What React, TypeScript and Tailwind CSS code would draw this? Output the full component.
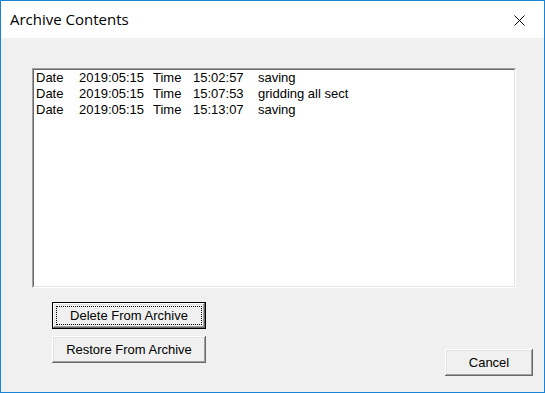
const rows = [
  { date: "2019:05:15", time: "15:02:57", note: "saving" },
  { date: "2019:05:15", time: "15:07:53", note: "gridding all sect" },
  { date: "2019:05:15", time: "15:13:07", note: "saving" },
];

const bevel =
  "shadow-[inset_-1px_-1px_0_#696969,inset_1px_1px_0_#ffffff,inset_-2px_-2px_0_#a0a0a0,inset_2px_2px_0_#e3e3e3]";

function Win95Button({ label, isDefault, className }: { label: string; isDefault?: boolean; className?: string }) {
  if (isDefault) {
    return (
      <div className={`border border-black bg-[#f0f0f0] ${className ?? ""}`}>
        <div className={`relative flex h-full w-full items-center justify-center ${bevel}`}>
          <div className="absolute inset-[3px] border border-dotted border-black" />
          <span className="text-[13px] text-black">{label}</span>
        </div>
      </div>
    );
  }
  return (
    <div className={`flex items-center justify-center bg-[#f0f0f0] ${bevel} ${className ?? ""}`}>
      <span className="text-[13px] text-black">{label}</span>
    </div>
  );
}

export default function App() {
  return (
    <div
      className="flex h-[393px] w-[545px] flex-col border border-[#1883d7] bg-[#f0f0f0]"
      style={{ fontFamily: '"Liberation Sans", Arial, sans-serif' }}
    >
      <div className="flex h-[37px] shrink-0 items-center justify-between bg-white pl-[9px] pr-[19px]">
        <span className="text-[15px] text-black" style={{ fontFamily: '"Open Sans", "Noto Sans", sans-serif' }}>
          Archive Contents
        </span>
        <svg width="11" height="11" viewBox="0 0 11 11" className="mt-[1px]">
          <path d="M0.5 0.5 L10.5 10.5 M10.5 0.5 L0.5 10.5" stroke="#000" strokeWidth="1" />
        </svg>
      </div>

      <div className="flex flex-1 flex-col pl-[31px] pt-[30px]">
        <div className="h-[220px] w-[484px] border border-b-white border-l-[#a0a0a0] border-r-white border-t-[#a0a0a0]">
          <div className="h-full w-full border border-b-[#e3e3e3] border-l-[#696969] border-r-[#e3e3e3] border-t-[#696969] bg-white">
            {rows.map((row, i) => (
              <div key={i} className="flex h-[16px] items-center text-[13px] leading-[16px] text-black">
                <span className="w-[45px] pl-[2px]">Date</span>
                <span className="w-[74px]">{row.date}</span>
                <span className="w-[40px]">Time</span>
                <span className="w-[65px]">{row.time}</span>
                <span>{row.note}</span>
              </div>
            ))}
          </div>
        </div>

        <div className="flex justify-between pr-[11px] pt-[14px]">
          <div className="ml-[20px] flex flex-col gap-[7px]">
            <Win95Button label="Delete From Archive" isDefault className="h-[27px] w-[154px]" />
            <Win95Button label="Restore From Archive" className="h-[27px] w-[154px]" />
          </div>
          <Win95Button label="Cancel" className="mt-[47px] h-[27px] w-[88px]" />
        </div>
      </div>
    </div>
  );
}
